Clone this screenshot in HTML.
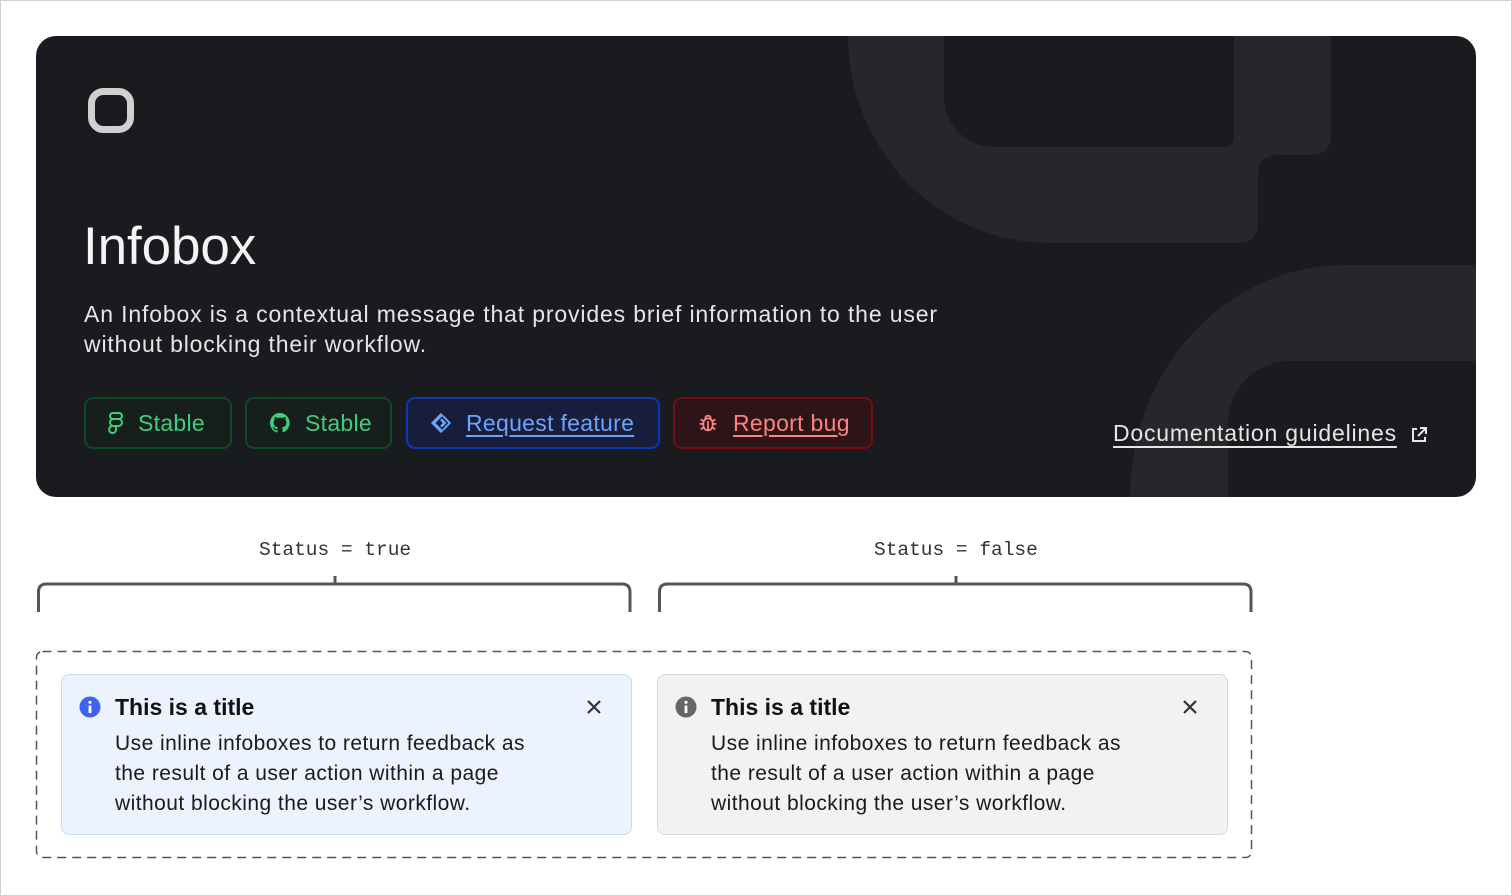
<!DOCTYPE html>
<html><head><meta charset="utf-8"><style>
*{margin:0;padding:0;box-sizing:border-box}
html,body{width:1512px;height:896px;overflow:hidden;background:#fff}
body{position:relative;font-family:"Liberation Sans",sans-serif;outline:1px solid #cfcfcf;outline-offset:-1px}
.card{position:absolute;left:36px;top:36px;width:1440px;height:461px;border-radius:20px;background:#1a1b1f;overflow:hidden}
.abs{position:absolute}
.h1{left:47px;top:180px;font-size:53px;color:#f4f4f4;letter-spacing:-0.1px}
.desc{left:48px;top:263px;font-size:23px;line-height:30px;color:#e6e6e6;width:950px;letter-spacing:0.85px}
.btn{position:absolute;top:361px;height:52px;border-radius:9px;border:2.5px solid;font-size:23px;display:flex;align-items:center;padding-left:22px;letter-spacing:0.3px}
.btn span{margin-left:14px}
.g{border-color:#0b4a24;background:#171f1d;color:#3ccf7d}
.b{border-color:#0e36b5;background:#171d3a;color:#6ba4ff}
.r{border-color:#7a0a14;background:#2c1419;color:#ff8080}
.u{text-decoration:underline;text-underline-offset:4px}
.doc{left:1077px;top:384px;font-size:23px;color:#e6e6e6;text-decoration:underline;text-underline-offset:5px;letter-spacing:0.8px}
.mono{position:absolute;font-family:"Liberation Mono",monospace;font-size:19.5px;color:#333;top:539px}
.ib{position:absolute;top:674px;width:571px;height:161px;border-radius:8px;border:1.5px solid}
.ib .t{position:absolute;left:53px;top:19px;font-size:23px;font-weight:bold;color:#111}
.ib .p{position:absolute;left:53px;top:54px;font-size:21px;line-height:30px;color:#1a1a1a;letter-spacing:0.45px}
.ib svg{position:absolute}
</style></head><body>
<div class="card">
<svg class="abs" style="left:0;top:0" width="1440" height="461" viewBox="36 36 1440 461">
<path fill="#27272b" fill-rule="evenodd" d="M848,36 L1331,36 L1331,135 Q1331,155 1311,155 L1278,155 Q1258,155 1258,175 L1258,223 Q1258,243 1238,243 L1050,243 A202 207 0 0 1 848 36 Z M944,36 L1234,36 L1234,137 Q1234,147 1224,147 L994,147 A50 50 0 0 1 944 97 Z"/>
<path fill="#27272b" d="M1130,497 A215 232 0 0 1 1345 265 L1476,265 L1476,361 L1290,361 A62 62 0 0 0 1228 423 L1228,497 Z"/>
<rect x="91.5" y="91.5" width="39" height="38" rx="12" fill="none" stroke="#d0d0d0" stroke-width="7"/>
</svg>
<div class="abs h1">Infobox</div>
<div class="abs desc">An Infobox is a contextual message that provides brief information to the user<br>without blocking their workflow.</div>
<div class="btn g" style="left:48px;width:148px"><svg width="16" height="22" viewBox="0 0 16 22" fill="none" stroke="#3ccf7d" stroke-width="2"><rect x="2" y="1" width="12" height="6" rx="3"/><rect x="2" y="7" width="12" height="7" rx="3.5"/><path d="M8 14v4a3.5 3.5 0 1 1-3.5-4"/></svg><span>Stable</span></div>
<div class="btn g" style="left:209px;width:147px"><svg width="22" height="22" viewBox="0 0 24 24"><path fill="#3ccf7d" d="M12 1a11 11 0 0 0-3.5 21.4c.6.1.8-.2.8-.5v-2c-3.1.7-3.700-1.4-3.700-1.4-.5-1.3-1.200-1.600-1.200-1.600-1-.7.1-.7.1-.7 1.100.1 1.700 1.100 1.700 1.100 1 1.700 2.600 1.200 3.200.9.1-.7.4-1.200.7-1.500-2.500-.3-5-1.200-5-5.400 0-1.200.4-2.200 1.100-2.900-.1-.3-.5-1.400.1-2.900 0 0 .9-.3 3 1.100a10 10 0 0 1 5.500 0c2.100-1.400 3-1.100 3-1.100.6 1.500.2 2.600.1 2.900.7.8 1.100 1.700 1.100 2.900 0 4.200-2.600 5.100-5 5.400.4.3.8 1 .8 2v3c0 .3.2.6.8.5A11 11 0 0 0 12 1z"/></svg><span>Stable</span></div>
<div class="btn b" style="left:370px;width:254px"><svg width="22" height="22" viewBox="0 0 24 24"><path fill="#6ba4ff" d="M12 1 L1 12 L12 23 L14.5 20.5 L6 12 L12 6 L14.5 3.5Z M13 7 L18 12 L13 17 L11 15 L14 12 L11 9Z M15 3.5 L23 12 L15 20.5 L13.5 19 L20 12 L13.5 5Z"/></svg><span class="u">Request feature</span></div>
<div class="btn r" style="left:637px;width:200px"><svg width="22" height="22" viewBox="0 0 24 24" fill="none" stroke="#ff8080" stroke-width="2"><rect x="7" y="7" width="10" height="13" rx="5"/><path d="M9 7a3 3 0 0 1 6 0M12 10v10M3 13h4M17 13h4M4 8l3 2M20 8l-3 2M4 19l3-2M20 19l-3-2"/></svg><span class="u">Report bug</span></div>
<div class="abs doc">Documentation guidelines</div>
<svg class="abs" style="left:1373px;top:389px" width="20" height="20" viewBox="0 0 20 20" fill="none" stroke="#e6e6e6" stroke-width="2"><path d="M8 4H4v12h12v-4M11 3h6v6M17 3l-8 8"/></svg>
</div>
<div class="mono" style="left:259px">Status = true</div>
<div class="mono" style="left:874px">Status = false</div>
<svg class="abs" style="left:0;top:0" width="1512" height="896">
<g fill="none" stroke="#555" stroke-width="3">
<path d="M38.5 612V592q0-8 8-8H622q8 0 8 8v20M335 576v8"/>
<path d="M659.5 612V592q0-8 8-8H1243q8 0 8 8v20M956 576v8"/>
</g>
<rect x="36.5" y="651.5" width="1215" height="206" rx="6" fill="none" stroke="#555" stroke-width="1.5" stroke-dasharray="9 6"/>
</svg>
<div class="ib" style="left:61px;background:#ecf3ff;border-color:#c6dcf7">
<svg style="left:17px;top:21px" width="22" height="22" viewBox="0 0 22 22"><circle cx="11" cy="11" r="10.5" fill="#3e63f0"/><rect x="9.6" y="9.5" width="2.8" height="7.5" fill="#fff"/><circle cx="11" cy="6.3" r="1.6" fill="#fff"/></svg>
<div class="t">This is a title</div>
<svg style="left:524px;top:24px" width="16" height="16" viewBox="0 0 16 16" stroke="#333" stroke-width="2.2"><path d="M2 2l12 12M14 2L2 14"/></svg>
<div class="p">Use inline infoboxes to return feedback as<br>the result of a user action within a page<br>without blocking the user’s workflow.</div>
</div>
<div class="ib" style="left:657px;background:#f2f2f2;border-color:#d9d9d9">
<svg style="left:17px;top:21px" width="22" height="22" viewBox="0 0 22 22"><circle cx="11" cy="11" r="10.5" fill="#666"/><rect x="9.6" y="9.5" width="2.8" height="7.5" fill="#fff"/><circle cx="11" cy="6.3" r="1.6" fill="#fff"/></svg>
<div class="t">This is a title</div>
<svg style="left:524px;top:24px" width="16" height="16" viewBox="0 0 16 16" stroke="#333" stroke-width="2.2"><path d="M2 2l12 12M14 2L2 14"/></svg>
<div class="p">Use inline infoboxes to return feedback as<br>the result of a user action within a page<br>without blocking the user’s workflow.</div>
</div>
</body></html>
